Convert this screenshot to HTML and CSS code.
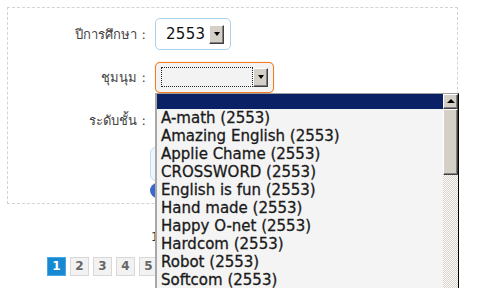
FILE: index.html
```html
<!DOCTYPE html>
<html lang="th">

<head>
    <meta charset="UTF-8">
    <meta name="viewport" content="width=device-width, initial-scale=1.0">
    <link rel="stylesheet" href="styles.css">
</head>

<body>
    <div class="panel">
        <div class="row">
            <label class="row-label">ปีการศึกษา :</label>
            <div class="select-wrap year">
                <span class="select-value">2553</span>
                <span class="drop-btn"><span class="arrow-down"></span></span>
            </div>
        </div>

        <div class="row">
            <label class="row-label">ชุมนุม :</label>
            <div class="select-wrap club">
                <span class="focus-box"></span>
                <span class="drop-btn"><span class="arrow-down"></span></span>

                <!-- open list of the club select -->
                <div class="dropdown">
                    <ul class="options">
                        <li class="selected">&nbsp;</li>
                        <li>A-math (2553)</li>
                        <li>Amazing English (2553)</li>
                        <li>Applie Chame (2553)</li>
                        <li>CROSSWORD (2553)</li>
                        <li>English is fun (2553)</li>
                        <li>Hand made (2553)</li>
                        <li>Happy O-net (2553)</li>
                        <li>Hardcom (2553)</li>
                        <li>Robot (2553)</li>
                        <li>Softcom (2553)</li>
                    </ul>
                    <div class="scrollbar">
                        <span class="scroll-up"><span class="arrow-up"></span></span>
                        <span class="scroll-thumb"></span>
                        <span class="scroll-track"></span>
                    </div>
                </div>
            </div>
        </div>

        <div class="row">
            <label class="row-label">ระดับชั้น :</label>
            <div class="select-wrap level"></div>
        </div>

        <div class="search-box"></div>
        <div class="search-btn"></div>
    </div>

    <div class="summary">1</div>

    <div class="pager">
        <span class="page current">1</span>
        <span class="page">2</span>
        <span class="page">3</span>
        <span class="page">4</span>
        <span class="page">5</span>
    </div>
</body>

</html>
```

FILE: styles.css
```css
html,
body {
    min-height: 288px;
}

body {
    margin: 0;
    font-family: "DejaVu Sans", "Noto Sans", sans-serif;
    color: #333;
    background: #fff;
    overflow: hidden;
}

.panel {
    margin: 7px 0 0 7px;
    width: 449px;
    height: 185px;
    border: 1px dashed #d3d3d3;
    padding-top: 10px;
    box-sizing: content-box;
}

.row {
    display: flex;
    align-items: center;
    height: 32px;
    margin-bottom: 11px;
}

.row-label {
    width: 138px;
    text-align: right;
    font-size: 13px;
    color: #444;
    margin-right: 9px;
}

.select-wrap {
    position: relative;
    display: flex;
    align-items: center;
    box-sizing: border-box;
    height: 32px;
    border-radius: 5px;
}

.year {
    width: 76px;
    border: 1px solid #a9d2ee;
    background: #fff;
    padding-left: 10px;
}

.select-value {
    font-size: 15px;
    color: #111;
    letter-spacing: 0.3px;
}

.year .drop-btn {
    margin-left: auto;
    margin-right: 6px;
}

.club {
    width: 119px;
    height: 31px;
    border: 1px solid #f47b20;
    box-shadow: 0 0 1px #f7a060;
    background: #f3f3f3;
    padding-left: 5px;
}

.focus-box {
    width: 92px;
    height: 20px;
    box-sizing: border-box;
    border: 1px dotted #222;
}

.level {
    width: 119px;
    border: 1px solid #a9d2ee;
}

.drop-btn {
    display: flex;
    align-items: center;
    justify-content: center;
    width: 15px;
    height: 19px;
    box-sizing: border-box;
    background: #d4d0c8;
    border: 1px solid;
    border-color: #fff #404040 #404040 #fff;
    box-shadow: inset -1px -1px 0 #808080;
}

.arrow-down {
    width: 0;
    height: 0;
    border-left: 3.5px solid transparent;
    border-right: 3.5px solid transparent;
    border-top: 4px solid #000;
}

.arrow-up {
    width: 0;
    height: 0;
    border-left: 4px solid transparent;
    border-right: 4px solid transparent;
    border-bottom: 4px solid #000;
}

/* the opened list */
.dropdown {
    position: absolute;
    top: 30px;
    left: -1px;
    width: 304px;
    height: 200px;
    display: flex;
    box-sizing: border-box;
    border-top: 1px solid #a0a0a0;
    border-left: 2px solid #a8a8a8;
    border-right: 1px solid #000;
    background: #f4f4f4;
    z-index: 2;
}

.options {
    flex: 1;
    margin: 0;
    padding: 0;
    list-style: none;
}

.options li {
    height: 18px;
    line-height: 18px;
    padding-left: 4px;
    font-size: 15px;
    color: #1a1a1a;
    white-space: nowrap;
    -webkit-text-stroke: 0.3px #1a1a1a;
}

.options li.selected {
    height: 15px;
    background: #0a2166;
}

.scrollbar {
    width: 15px;
    display: flex;
    flex-direction: column;
}

.scroll-up,
.scroll-thumb {
    display: flex;
    align-items: center;
    justify-content: center;
    box-sizing: border-box;
    background: #d4d0c8;
    border: 1px solid;
    border-color: #fff #404040 #404040 #fff;
    box-shadow: inset -1px -1px 0 #808080;
}

.scroll-up {
    height: 15px;
}

.scroll-thumb {
    height: 66px;
}

.scroll-track {
    flex: 1;
    background: repeating-conic-gradient(#d4d0c8 0 25%, #fff 0 50%) 0 0 / 2px 2px;
}

.search-box {
    margin: 2px 0 0 142px;
    width: 120px;
    height: 34px;
    box-sizing: border-box;
    border: 1px solid #c2ddf2;
    border-radius: 6px;
    background: #eef5fb;
}

.search-btn {
    margin: 2px 0 0 142px;
    width: 60px;
    height: 15px;
    border-radius: 8px;
    background: #3a68cc;
}

.summary {
    margin: 26px 0 0 151px;
    font-size: 12px;
    color: #333;
}

.pager {
    display: flex;
    gap: 4px;
    margin: 13px 0 0 47px;
}

.page {
    width: 19px;
    height: 19px;
    box-sizing: border-box;
    border: 1px solid #d8d8d8;
    background: #f2f2f2;
    color: #666;
    font-size: 12px;
    font-weight: bold;
    text-align: center;
    line-height: 17px;
}

.page.current {
    background: #1689d2;
    border-color: #4aa6e4;
    color: #fff;
}
```
